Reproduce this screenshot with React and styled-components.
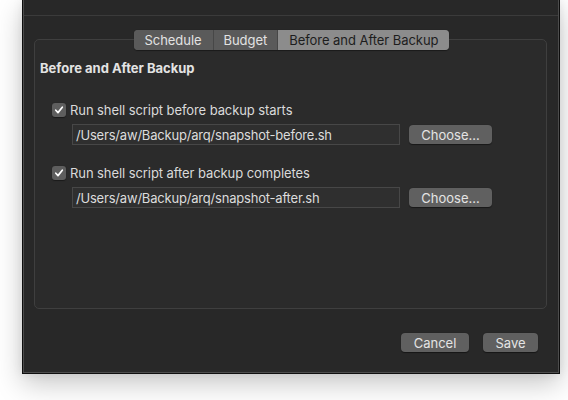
import React from "react";
import styled, { createGlobalStyle } from "styled-components";

const Global = createGlobalStyle`
  html, body { margin: 0; padding: 0; background: #ffffff; }
  body { font-family: Inter, "Noto Sans", "Liberation Sans", sans-serif; -webkit-font-smoothing: antialiased; }
`;

const Page = styled.div`
  width: 568px;
  height: 400px;
  overflow: hidden;
  padding-left: 22px;
  box-sizing: border-box;
`;

const Window = styled.div`
  width: 538px;
  height: 374px;
  box-sizing: border-box;
  background: #282828;
  border: 1px solid #0e0e0e;
  border-top: none;
  box-shadow: inset 1px 0 0 #4c4c4c, inset -1px 0 0 #4c4c4c, inset 0 -1px 0 #4c4c4c,
    0 10px 26px rgba(0, 0, 0, 0.22), 0 0 10px rgba(0, 0, 0, 0.08);
  display: flex;
  flex-direction: column;
`;

const Toolbar = styled.div`
  height: 15px;
  flex: none;
  margin: 0 1px;
  border-bottom: 1px solid #3b3b3b;
`;

const Content = styled.div`
  flex: 1;
  display: flex;
  flex-direction: column;
  padding: 14px 12px 0 11px;
`;

const TabRow = styled.div`
  display: flex;
  justify-content: center;
  position: relative;
  z-index: 1;
  padding-left: 2px;
`;

const Tabs = styled.div`
  display: flex;
  height: 20px;
  border-radius: 4px;
  overflow: hidden;
  background: #5a5a5a;
  box-shadow: 0 0.5px 1px rgba(0, 0, 0, 0.4);
`;

const Tab = styled.div`
  display: flex;
  align-items: center;
  justify-content: center;
  padding: 0 ${(p) => p.$pad}px;
  font-size: 13px;
  letter-spacing: -0.05px;
  color: ${(p) => (p.$active ? "#1d1d1d" : "#e2e2e2")};
  background: ${(p) => (p.$active ? "#8c8c8c" : "#5a5a5a")};
  border-left: ${(p) => (p.$first ? "none" : "1px solid #474747")};
  white-space: nowrap;
`;

const Box = styled.div`
  margin-top: -11px;
  height: 270px;
  box-sizing: border-box;
  background: #2b2b2b;
  border: 1px solid #3f3f3f;
  border-radius: 5px;
  padding: 20px 5px 0 5px;
  display: flex;
  flex-direction: column;
`;

const Heading = styled.div`
  font-size: 13px;
  font-weight: 700;
  line-height: 16px;
  color: #e3e3e3;
  margin-bottom: 26px;
`;

const Group = styled.div`
  display: flex;
  flex-direction: column;
  padding-left: 12px;
  margin-bottom: ${(p) => p.$mb}px;
`;

const CheckRow = styled.label`
  display: flex;
  align-items: center;
  height: 16px;
  gap: 4px;
  font-size: 13px;
  letter-spacing: -0.08px;
  color: #dadada;
  margin-bottom: 6px;
`;

const CheckBox = styled.span`
  width: 14px;
  height: 14px;
  border-radius: 3px;
  background: #5e5e5e;
  display: flex;
  align-items: center;
  justify-content: center;
  box-shadow: 0 0.5px 1px rgba(0, 0, 0, 0.4);
`;

const FieldRow = styled.div`
  display: flex;
  align-items: center;
  padding-left: 20px;
  gap: 9px;
`;

const Field = styled.div`
  width: 328px;
  height: 21px;
  box-sizing: border-box;
  background: #2f2f2f;
  border: 1px solid #474747;
  display: flex;
  align-items: center;
  padding-left: 3px;
  font-size: 13px;
  letter-spacing: -0.2px;
  color: #dcdcdc;
  white-space: nowrap;
`;

const Button = styled.div`
  width: ${(p) => p.$w}px;
  height: 19px;
  border-radius: 4px;
  background: #606060;
  box-shadow: 0 0.5px 1px rgba(0, 0, 0, 0.45);
  display: flex;
  align-items: center;
  justify-content: center;
  font-size: 13px;
  color: #e4e4e4;
`;

const Footer = styled.div`
  display: flex;
  justify-content: flex-end;
  gap: 14px;
  padding: 24px 9px 0 0;
`;

const Check = () => (
  <svg width="10" height="10" viewBox="0 0 10 10">
    <path d="M1.8 5.2 L4 7.6 L8.3 2.2" fill="none" stroke="#ffffff" strokeWidth="1.7" strokeLinecap="round" strokeLinejoin="round" />
  </svg>
);

export default function App() {
  return (
    <Page>
      <Global />
      <Window>
        <Toolbar />
        <Content>
          <TabRow>
            <Tabs>
              <Tab $first $pad={11}>Schedule</Tab>
              <Tab $pad={10}>Budget</Tab>
              <Tab $active $pad={11}>Before and After Backup</Tab>
            </Tabs>
          </TabRow>
          <Box>
            <Heading>Before and After Backup</Heading>
            <Group $mb={20}>
              <CheckRow>
                <CheckBox><Check /></CheckBox>
                Run shell script before backup starts
              </CheckRow>
              <FieldRow>
                <Field>/Users/aw/Backup/arq/snapshot-before.sh</Field>
                <Button $w={83}>Choose...</Button>
              </FieldRow>
            </Group>
            <Group $mb={0}>
              <CheckRow>
                <CheckBox><Check /></CheckBox>
                Run shell script after backup completes
              </CheckRow>
              <FieldRow>
                <Field>/Users/aw/Backup/arq/snapshot-after.sh</Field>
                <Button $w={83}>Choose...</Button>
              </FieldRow>
            </Group>
          </Box>
          <Footer>
            <Button $w={68}>Cancel</Button>
            <Button $w={55}>Save</Button>
          </Footer>
        </Content>
      </Window>
    </Page>
  );
}
